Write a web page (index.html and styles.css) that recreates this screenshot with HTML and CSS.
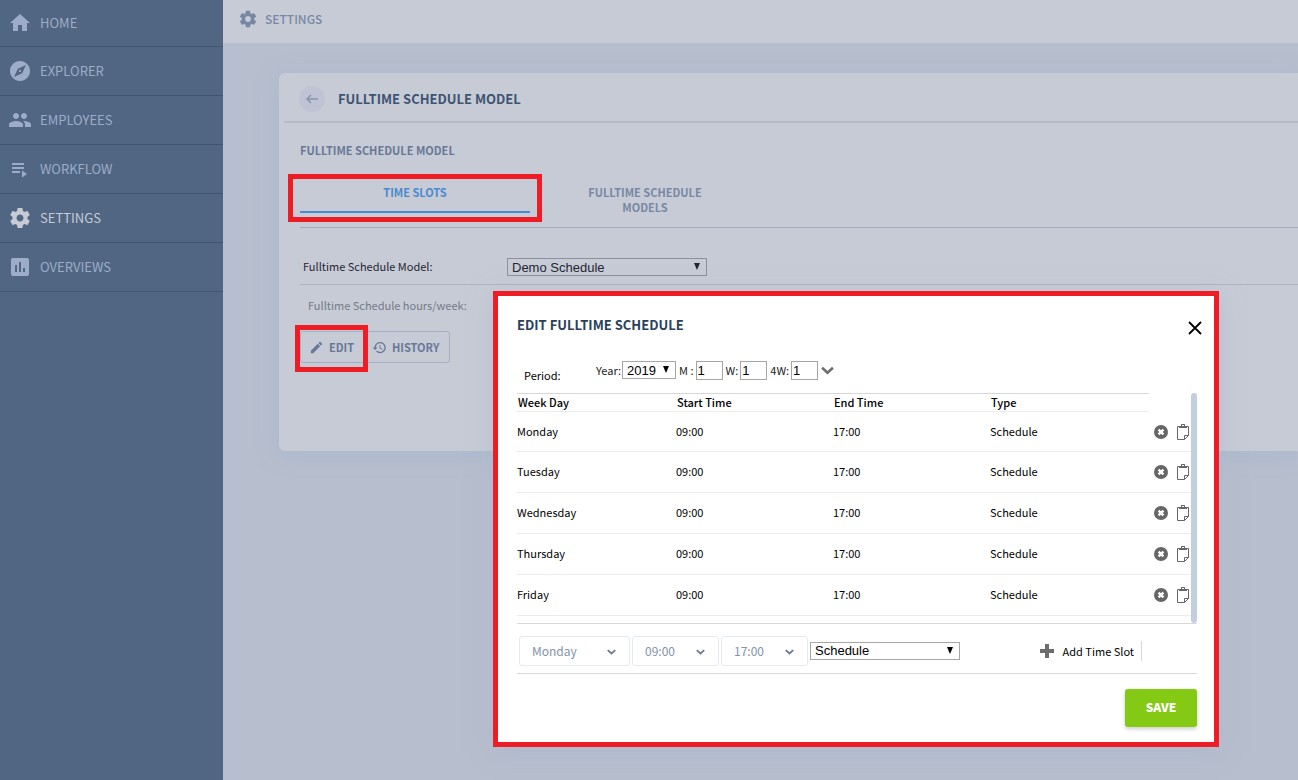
FILE: index.html
```html
<!DOCTYPE html>
<html lang="en">
<head>
  <meta charset="UTF-8">
  <meta name="viewport" content="width=device-width, initial-scale=1.0">
  <title>Settings</title>
  <link rel="stylesheet" href="styles.css">
</head>
<body>
  <!-- Shared icon shapes -->
  <svg class="icon-defs" width="0" height="0" aria-hidden="true">
    <symbol id="gear" viewBox="0 0 24 24">
      <path d="M19.43 12.98c.04-.32.07-.64.07-.98s-.03-.66-.07-.98l2.11-1.65c.19-.15.24-.42.12-.64l-2-3.46c-.12-.22-.39-.3-.61-.22l-2.49 1c-.52-.4-1.08-.73-1.69-.98l-.38-2.65C14.46 2.18 14.25 2 14 2h-4c-.25 0-.46.18-.49.42l-.38 2.65c-.61.25-1.17.59-1.69.98l-2.49-1c-.23-.09-.49 0-.61.22l-2 3.46c-.13.22-.07.49.12.64l2.11 1.65c-.04.32-.07.65-.07.98s.03.66.07.98l-2.11 1.65c-.19.15-.24.42-.12.64l2 3.46c.12.22.39.3.61.22l2.49-1c.52.4 1.08.73 1.69.98l.38 2.65c.03.24.24.42.49.42h4c.25 0 .46-.18.49-.42l.38-2.65c.61-.25 1.17-.59 1.69-.98l2.49 1c.23.09.49 0 .61-.22l2-3.46c.12-.22.07-.49-.12-.64l-2.11-1.65zM12 15.5c-1.93 0-3.5-1.57-3.5-3.5s1.57-3.5 3.5-3.5 3.5 1.57 3.5 3.5-1.57 3.5-3.5 3.5z"/>
    </symbol>
    <symbol id="chevron" viewBox="0 0 12 8">
      <path d="M1 1.5l5 4.5 5-4.5" fill="none" stroke="currentColor" stroke-width="2.4"/>
    </symbol>
    <symbol id="triangle" viewBox="0 0 6 7">
      <path d="M0 0h6L3 7z"/>
    </symbol>
    <symbol id="remove" viewBox="0 0 14 14">
      <circle cx="7" cy="7" r="7"/>
      <path d="M4.6 4.6l4.8 4.8M9.4 4.6l-4.8 4.8" stroke="#fff" stroke-width="2.4"/>
    </symbol>
    <symbol id="paste" viewBox="0 0 12 16">
      <path d="M2 2.5H.5v13h7l4-4v-9H10M7.5 15.5v-4h4" fill="none" stroke="currentColor"/>
      <path d="M2 2h2V.5C4 .2 4.200 0 4.500 0h3c.3 0 .5.2.5.5V2h2v2H2zM5 1v1h2V1z" fill-rule="evenodd"/>
    </symbol>
  </svg>

  <nav class="sidebar">
    <a href="#" class="nav-item">
      <svg viewBox="0 0 24 24"><path d="M10 20v-6h4v6h5v-8h3L12 3 2 12h3v8z"/></svg>
      HOME
    </a>
    <a href="#" class="nav-item">
      <svg viewBox="0 0 24 24"><path d="M12 10.900c-.61 0-1.100.49-1.100 1.100s.49 1.100 1.100 1.100 1.100-.49 1.100-1.100-.49-1.100-1.100-1.100zM12 2C6.480 2 2 6.480 2 12s4.480 10 10 10 10-4.480 10-10S17.520 2 12 2zm2.190 12.190L6 18l3.810-8.190L18 6l-3.810 8.190z"/></svg>
      EXPLORER
    </a>
    <a href="#" class="nav-item">
      <svg viewBox="0 0 24 24"><path d="M16 11c1.660 0 2.990-1.340 2.990-3S17.660 5 16 5s-3 1.340-3 3 1.340 3 3 3zm-8 0c1.660 0 2.990-1.340 2.990-3S9.660 5 8 5 5 6.340 5 8s1.340 3 3 3zm0 2c-2.330 0-7 1.170-7 3.500V19h14v-2.500c0-2.330-4.670-3.500-7-3.500zm8 0c-.29 0-.62.02-.97.05 1.160.84 1.970 1.970 1.970 3.450V19h6v-2.500c0-2.330-4.670-3.500-7-3.500z"/></svg>
      EMPLOYEES
    </a>
    <a href="#" class="nav-item">
      <svg viewBox="0 0 24 24"><path d="M4 6h12v2H4zM4 10h12v2H4zM4 14h8v2H4zM14 13.500v7l5-3.500z"/></svg>
      WORKFLOW
    </a>
    <a href="#" class="nav-item active">
      <svg><use href="#gear"/></svg>
      SETTINGS
    </a>
    <a href="#" class="nav-item">
      <svg viewBox="0 0 24 24"><path d="M19 3H5c-1.100 0-2 .9-2 2v14c0 1.100.9 2 2 2h14c1.100 0 2-.9 2-2V5c0-1.100-.9-2-2-2zM9 17H7v-7h2v7zm4 0h-2V7h2v10zm4 0h-2v-4h2v4z"/></svg>
      OVERVIEWS
    </a>
  </nav>

  <div class="page">
    <header class="page-header">
      <svg><use href="#gear"/></svg>
      SETTINGS
    </header>

    <main class="card">
      <div class="card-header">
        <button type="button" class="back" aria-label="Back">
          <svg viewBox="0 0 12 10"><path d="M12 5H1M5 1L1 5l4 4" fill="none" stroke="currentColor" stroke-width="1.500"/></svg>
        </button>
        <h1>FULLTIME SCHEDULE MODEL</h1>
      </div>
      <div class="card-body">
        <h2>FULLTIME SCHEDULE MODEL</h2>
        <div class="tabs">
          <button type="button" class="tab selected">TIME SLOTS</button>
          <button type="button" class="tab">FULLTIME SCHEDULE MODELS</button>
        </div>
        <div class="field-row">
          <label for="model">Fulltime Schedule Model:</label>
          <div class="select model-select">
            <select id="model"><option>Demo Schedule</option></select>
            <svg><use href="#triangle"/></svg>
          </div>
        </div>
        <p class="hours">Fulltime Schedule hours/week:</p>
        <div class="actions">
          <button type="button" class="edit">
            <svg viewBox="0 0 24 24"><path d="M3 17.250V21h3.750L17.810 9.940l-3.750-3.750L3 17.250zM20.710 7.040c.39-.39.39-1.020 0-1.410l-2.340-2.340c-.39-.39-1.020-.39-1.410 0l-1.830 1.830 3.750 3.750 1.830-1.830z"/></svg>
            EDIT
          </button>
          <button type="button" class="history">
            <svg viewBox="0 0 24 24"><path d="M13 3c-4.970 0-9 4.030-9 9H1l3.890 3.890.07.14L9 12H6c0-3.870 3.130-7 7-7s7 3.130 7 7-3.130 7-7 7c-1.930 0-3.680-.79-4.940-2.060l-1.420 1.420C8.270 19.990 10.510 21 13 21c4.970 0 9-4.030 9-9s-4.030-9-9-9zm-1 5v5l4.280 2.540.72-1.210-3.500-2.080V8H12z"/></svg>
            HISTORY
          </button>
        </div>
      </div>
    </main>
  </div>

  <div class="modal" role="dialog" aria-labelledby="modal-title">
    <div class="modal-header">
      <h2 id="modal-title">EDIT FULLTIME SCHEDULE</h2>
      <button type="button" class="close" aria-label="Close">
        <svg viewBox="0 0 14 14"><path d="M1 1l12 12M13 1L1 13" stroke="currentColor" stroke-width="1.800"/></svg>
      </button>
    </div>

    <div class="period">
      <span class="period-label">Period:</span>
      <label for="year">Year:</label>
      <div class="select year-select">
        <select id="year"><option>2019</option></select>
        <svg><use href="#triangle"/></svg>
      </div>
      <label for="month">M :</label>
      <input type="text" id="month" value="1">
      <label for="week">W:</label>
      <input type="text" id="week" value="1">
      <label for="four-week">4W:</label>
      <input type="text" id="four-week" value="1">
      <button type="button" class="expand" aria-label="More"><svg><use href="#chevron"/></svg></button>
    </div>

    <div class="slots">
      <table>
        <thead>
          <tr><th>Week Day</th><th>Start Time</th><th>End Time</th><th>Type</th><td></td></tr>
        </thead>
        <tbody>
          <tr>
            <td>Monday</td><td>09:00</td><td>17:00</td><td>Schedule</td>
            <td><div class="row-actions">
              <button type="button" aria-label="Remove"><svg class="remove"><use href="#remove"/></svg></button>
              <button type="button" aria-label="Copy"><svg class="paste"><use href="#paste"/></svg></button>
            </div></td>
          </tr>
          <tr>
            <td>Tuesday</td><td>09:00</td><td>17:00</td><td>Schedule</td>
            <td><div class="row-actions">
              <button type="button" aria-label="Remove"><svg class="remove"><use href="#remove"/></svg></button>
              <button type="button" aria-label="Copy"><svg class="paste"><use href="#paste"/></svg></button>
            </div></td>
          </tr>
          <tr>
            <td>Wednesday</td><td>09:00</td><td>17:00</td><td>Schedule</td>
            <td><div class="row-actions">
              <button type="button" aria-label="Remove"><svg class="remove"><use href="#remove"/></svg></button>
              <button type="button" aria-label="Copy"><svg class="paste"><use href="#paste"/></svg></button>
            </div></td>
          </tr>
          <tr>
            <td>Thursday</td><td>09:00</td><td>17:00</td><td>Schedule</td>
            <td><div class="row-actions">
              <button type="button" aria-label="Remove"><svg class="remove"><use href="#remove"/></svg></button>
              <button type="button" aria-label="Copy"><svg class="paste"><use href="#paste"/></svg></button>
            </div></td>
          </tr>
          <tr>
            <td>Friday</td><td>09:00</td><td>17:00</td><td>Schedule</td>
            <td><div class="row-actions">
              <button type="button" aria-label="Remove"><svg class="remove"><use href="#remove"/></svg></button>
              <button type="button" aria-label="Copy"><svg class="paste"><use href="#paste"/></svg></button>
            </div></td>
          </tr>
        </tbody>
      </table>
      <div class="scrollbar"></div>
    </div>

    <div class="new-slot">
      <div class="picker day">
        <select aria-label="Week day"><option>Monday</option></select>
        <svg><use href="#chevron"/></svg>
      </div>
      <div class="picker">
        <select aria-label="Start time"><option>09:00</option></select>
        <svg><use href="#chevron"/></svg>
      </div>
      <div class="picker">
        <select aria-label="End time"><option>17:00</option></select>
        <svg><use href="#chevron"/></svg>
      </div>
      <div class="select type-select">
        <select aria-label="Type"><option>Schedule</option></select>
        <svg><use href="#triangle"/></svg>
      </div>
      <button type="button" class="add">
        <svg viewBox="0 0 14 14"><path d="M5 0h4v5h5v4H9v5H5V9H0V5h5z"/></svg>
        Add Time Slot
      </button>
    </div>

    <div class="modal-footer">
      <button type="submit" class="save">SAVE</button>
    </div>
  </div>
</body>
</html>
```
FILE: styles.css
```css
* {
  box-sizing: border-box;
}
body {
  margin: 0;
  display: flex;
  min-height: 100vh;
  background-color: #b7bece;
  font-family: "Noto Sans CJK SC", "Noto Sans", sans-serif;
  font-size: 11px;
  line-height: 16px;
  color: #000;
}
h1, h2, p {
  margin: 0;
}
svg {
  fill: currentColor;
  flex: none;
}
button {
  font: inherit;
  color: inherit;
  background: none;
  border: 0;
  padding: 0;
  cursor: pointer;
}
.icon-defs {
  position: absolute;
}

/* Sidebar */
.sidebar {
  flex: none;
  width: 223px;
  background-color: #506682;
}
.nav-item {
  display: flex;
  align-items: center;
  gap: 8px;
  height: 49px;
  padding-left: 8px;
  border-bottom: 1px solid #3f5571;
  color: #9dadc9;
  font-size: 13px;
  text-decoration: none;
}
.nav-item:first-child {
  height: 47px;
}
.nav-item svg {
  width: 24px;
  height: 24px;
}
.nav-item.active {
  color: #c7cbd6;
}

/* Page */
.page {
  flex: 1;
  min-width: 0;
}
.page-header {
  display: flex;
  align-items: center;
  gap: 7px;
  height: 43px;
  padding: 0 0 5px 15px;
  background-color: #c7cbd6;
  color: #7888a4;
  font-size: 12px;
  font-weight: 500;
}
.page-header svg {
  width: 20px;
  height: 20px;
}
.card {
  margin: 30px 0 0 56px;
  padding-left: 5px;
  min-height: 378px;
  background-color: #c7cbd6;
  border-radius: 6px 0 0 6px;
  box-shadow: 0 4px 20px rgba(165, 182, 206, 0.7);
}
.card-header {
  display: flex;
  align-items: center;
  gap: 13px;
  height: 50px;
  padding: 4px 0 0 15px;
  border-bottom: 2px solid #b4bccc;
}
.back {
  display: flex;
  align-items: center;
  justify-content: center;
  width: 26px;
  height: 26px;
  border-radius: 50%;
  background-color: #bfc3d3;
  color: #8894ad;
}
.back svg {
  width: 12px;
  height: 10px;
}
.card-header h1 {
  font-size: 13px;
  color: #3e5472;
}
.card-body {
  padding: 19px 0 0 16px;
}
.card-body h2 {
  font-size: 11px;
  color: #677897;
}
.tabs {
  display: flex;
  margin-top: 21px;
  height: 49px;
  border-bottom: 1px solid #a3acbf;
}
.tab {
  position: relative;
  display: flex;
  justify-content: center;
  width: 230px;
  height: 34px;
  padding: 6px 50px 0;
  line-height: 15px;
  font-weight: bold;
  color: #7888a4;
}
.tab.selected {
  border-bottom: 2px solid #4a8acf;
  color: #4a8acf;
}
/* Highlight frames */
.tab.selected::after,
.edit::after {
  content: "";
  position: absolute;
  border: 5px solid #ee1c25;
}
.tab.selected::after {
  inset: -5px -12px -11px -12px;
}
.edit::after {
  inset: -7px -1px -10px -6px;
}
.field-row {
  display: flex;
  align-items: center;
  height: 57px;
  padding: 22px 0 0 3px;
  border-bottom: 1px solid #adb3c0;
  color: #1f2733;
}
.field-row label {
  width: 204px;
  padding-bottom: 2px;
}
.hours {
  padding: 12px 0 0 8px;
  color: #747a87;
}
.actions {
  display: flex;
  width: 150px;
  height: 32px;
  margin-top: 18px;
  border: 1px solid #a3afc5;
  border-radius: 3px;
  color: #677897;
}
.actions button {
  position: relative;
  display: flex;
  align-items: center;
  gap: 5px;
  font-weight: bold;
}
.actions .edit {
  width: 66px;
  padding-left: 8px;
}
.actions .history {
  padding-left: 5px;
}
.actions svg {
  width: 15px;
  height: 15px;
}

/* Plain selects and inputs */
.select {
  position: relative;
  height: 18px;
}
.select select {
  display: block;
  appearance: none;
  width: 100%;
  height: 100%;
  margin: 0;
  padding: 0 4px;
  border: 1px solid #a6a6a6;
  border-radius: 0;
  background: none;
  color: inherit;
  font: 13px "Liberation Sans", Arial, sans-serif;
}
.select svg {
  position: absolute;
  top: 5px;
  right: 7px;
  width: 6px;
  height: 7px;
  pointer-events: none;
}
.model-select {
  width: 200px;
}
.model-select select {
  border-color: #8c919d;
}
.year-select {
  width: 54px;
}
.type-select {
  width: 150px;
}

/* Modal */
.modal {
  position: absolute;
  top: 291px;
  left: 493px;
  right: 79px;
  padding: 20px 17px 15px 19px;
  background-color: #fff;
  border: 5px solid #ee1c25;
  box-shadow: 0 4px 20px rgba(165, 182, 206, 0.5);
}
.modal-header {
  display: flex;
  justify-content: space-between;
  height: 45px;
}
.modal-header h2 {
  font-size: 13px;
  line-height: 18px;
  color: #28405c;
}
.close {
  display: flex;
  align-items: center;
  height: 24px;
  margin-right: -5px;
}
.close svg {
  width: 14px;
  height: 14px;
}
.period {
  display: flex;
  align-items: center;
  height: 32px;
  padding: 0 0 14px 7px;
}
.period-label {
  width: 72px;
  padding-top: 10px;
}
.period label {
  padding: 0 2px 0 3px;
  color: #222;
}
.period label[for="year"] {
  padding: 0 1px 0 0;
}
.period input {
  width: 27px;
  height: 19px;
  padding: 0 1px;
  border: 1px solid #a6a6a6;
  font: 13px "Liberation Sans", Arial, sans-serif;
}
.expand {
  display: flex;
  margin-left: 3px;
  color: #6d6d6d;
}
.expand svg {
  width: 13px;
  height: 9px;
}
.slots {
  display: flex;
  height: 231px;
  border-bottom: 1px solid #d8d8d8;
}
.slots table {
  flex: 1;
  align-self: flex-start;
  border-collapse: separate;
  border-spacing: 0;
}
.slots th,
.slots td {
  padding: 0;
  text-align: left;
  border-bottom: 1px solid #ececec;
}
.slots th {
  width: 157px;
  height: 19px;
  padding-left: 1px;
  line-height: 17px;
  font-weight: 500;
  border-top: 1px solid #d8d8d8;
}
.slots th:first-child,
.slots th:last-of-type {
  width: 159px;
}
.slots thead td {
  width: 42px;
  border: 0;
}
.slots tbody td {
  height: 41px;
  padding-bottom: 2px;
}
.slots tbody td:last-child {
  padding-bottom: 0;
}
.slots tbody tr:first-child td {
  height: 40px;
}
.row-actions {
  display: flex;
  align-items: center;
  gap: 9px;
  padding-left: 5px;
  color: #666;
}
.row-actions button,
.row-actions svg {
  display: block;
}
.remove {
  width: 14px;
  height: 14px;
}
.paste {
  width: 12px;
  height: 16px;
}
.scrollbar {
  width: 6px;
  border-radius: 3px;
  background-color: #c3cfdf;
}
.new-slot {
  display: flex;
  align-items: center;
  gap: 2px;
  height: 50px;
  padding: 4px 0 0 2px;
  border-bottom: 1px solid #d8d8d8;
}
.picker {
  position: relative;
  width: 87px;
  height: 30px;
}
.picker.day {
  width: 111px;
}
.picker select {
  display: block;
  appearance: none;
  width: 100%;
  height: 100%;
  margin: 0;
  padding: 0 12px;
  border: 1px solid #e4e9f2;
  border-radius: 3px;
  background: none;
  color: #8193a8;
  font: 12px "Noto Sans CJK SC", "Noto Sans", sans-serif;
}
.picker svg {
  position: absolute;
  top: 13px;
  right: 14px;
  width: 9px;
  height: 6px;
  color: #6b7a90;
  pointer-events: none;
}
.add {
  display: flex;
  align-items: center;
  gap: 9px;
  height: 20px;
  margin: 0 55px 0 auto;
  padding-right: 7px;
  border-right: 1px solid #d8d8d8;
}
.add svg {
  width: 14px;
  height: 14px;
  color: #6d6d6d;
}
.modal-footer {
  display: flex;
  justify-content: flex-end;
  padding-top: 15px;
}
.save {
  width: 72px;
  height: 38px;
  padding-bottom: 2px;
  border-radius: 3px;
  background-color: #84c913;
  box-shadow: 0 2px 4px rgba(0, 0, 0, 0.2);
  color: #fff;
  font-size: 12px;
  font-weight: 900;
}
```
